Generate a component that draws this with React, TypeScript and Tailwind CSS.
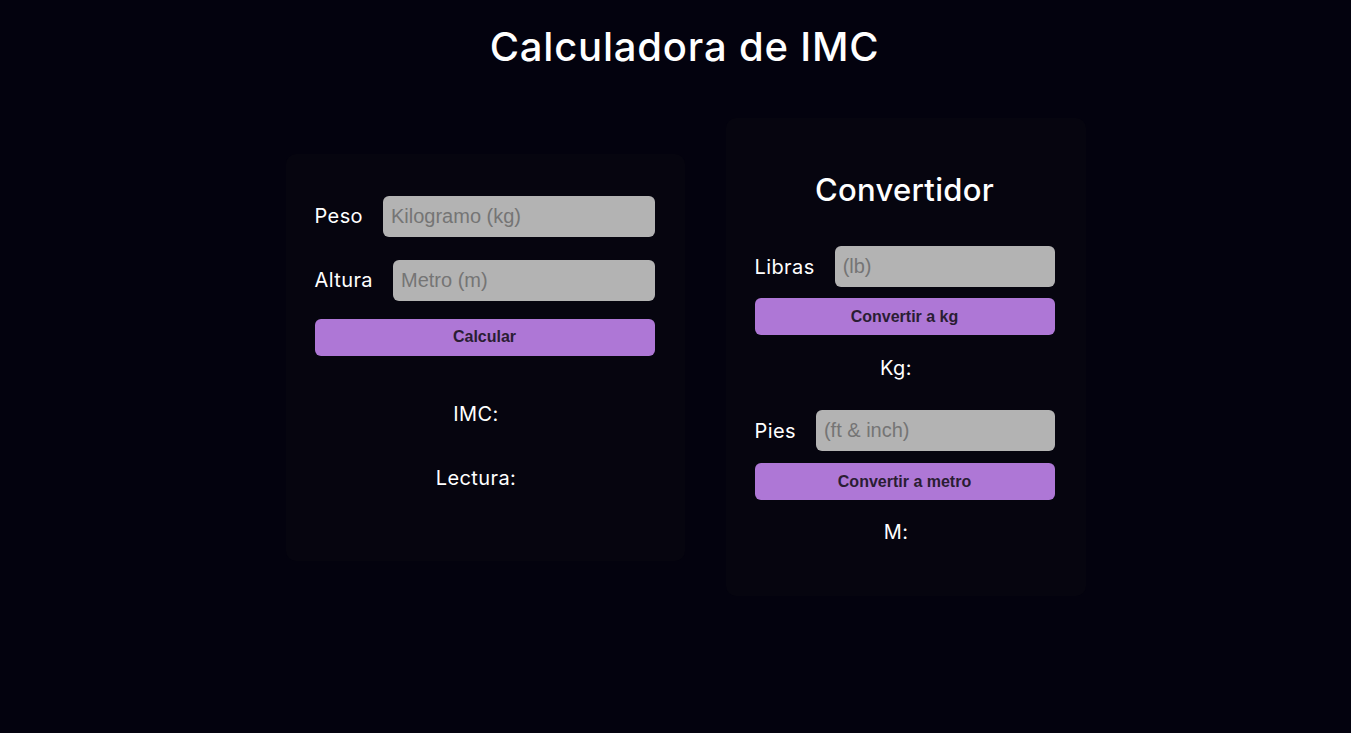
import React from "react";

const mont = "font-['Inter','Liberation_Sans',sans-serif] tracking-[0.4px]";

function Field({ label, placeholder }: { label: string; placeholder: string }) {
  return (
    <div className="flex items-center gap-5">
      <label className={`${mont} text-[20px] text-white whitespace-nowrap`}>{label}</label>
      <input
        placeholder={placeholder}
        className="flex-1 min-w-0 h-[41px] rounded-[6px] bg-[#b3b3b3] px-2 font-['Liberation_Sans',Arial,sans-serif] text-[20px] text-[#333] placeholder:text-[#757575] outline-none"
      />
    </div>
  );
}

function Btn({ children }: { children: React.ReactNode }) {
  return (
    <button className="w-full h-[37px] rounded-[6px] bg-[#ae77d6] font-['Liberation_Sans',Arial,sans-serif] font-bold text-[16px] text-[#2a1d33]">
      {children}
    </button>
  );
}

function Result({ children, mt }: { children: React.ReactNode; mt: string }) {
  return <p className={`${mont} text-[20px] leading-[22px] text-center pr-[17px] ${mt}`}>{children}</p>;
}

export default function App() {
  return (
    <div className="min-h-[733px] w-full bg-[#03020e] text-white">
      <h1 className="font-['Inter','Liberation_Sans',sans-serif] tracking-[0.8px] text-center text-[40px] leading-[48px] pt-[23px] pl-[18px] font-medium">
        Calculadora de IMC
      </h1>
      <div className="flex items-center justify-center gap-[41px] pl-[20px] mt-[47px]">
        <div className="w-[399px] rounded-[10px] bg-[#06050f] pl-[29px] pr-[30px] pt-[42px] pb-[72px] flex flex-col">
          <Field label="Peso" placeholder="Kilogramo (kg)" />
          <div className="mt-[23px]">
            <Field label="Altura" placeholder="Metro (m)" />
          </div>
          <div className="mt-[18px]">
            <Btn>Calcular</Btn>
          </div>
          <Result mt="mt-[47px]">IMC:</Result>
          <Result mt="mt-[42px]">Lectura:</Result>
        </div>
        <div className="w-[360px] rounded-[10px] bg-[#06050f] pl-[29px] pr-[31px] pt-[54px] pb-[53px] flex flex-col">
          <h2 className="font-['Inter','Liberation_Sans',sans-serif] tracking-[0.3px] text-[31px] leading-[36px] text-center font-medium">
            Convertidor
          </h2>
          <div className="mt-[38px]">
            <Field label="Libras" placeholder="(lb)" />
          </div>
          <div className="mt-[11px]">
            <Btn>Convertir a kg</Btn>
          </div>
          <Result mt="mt-[22px]">Kg:</Result>
          <div className="mt-[31px]">
            <Field label="Pies" placeholder="(ft & inch)" />
          </div>
          <div className="mt-[12px]">
            <Btn>Convertir a metro</Btn>
          </div>
          <Result mt="mt-[21px]">M:</Result>
        </div>
      </div>
    </div>
  );
}
